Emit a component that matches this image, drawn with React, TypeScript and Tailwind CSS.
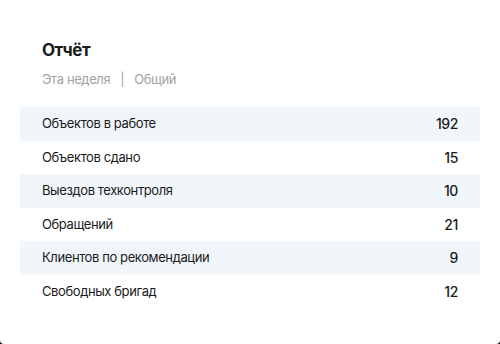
const rows = [
  { label: "Объектов в работе", value: 192 },
  { label: "Объектов сдано", value: 15 },
  { label: "Выездов техконтроля", value: 10 },
  { label: "Обращений", value: 21 },
  { label: "Клиентов по рекомендации", value: 9 },
  { label: "Свободных бригад", value: 12 },
];

export default function App() {
  return (
    <div className="h-[344px] w-[500px] bg-black">
      <div className="h-full bg-white rounded-b-[4px] pt-[38px] font-['Inter',sans-serif] text-[#1a1a1a]">
        <div className="px-[42px]">
          <h2 className="text-[17px] leading-6 font-bold tracking-[-0.5px]">Отчёт</h2>
          <div className="mt-[7px] flex items-center text-[13px] leading-5 tracking-[-0.4px] text-[#a3a3a3]">
            <span>Эта неделя</span>
            <span className="mx-[10px]">|</span>
            <span>Общий</span>
          </div>
        </div>
        <div className="mx-5 mt-[18px]">
          {rows.map((row, i) => (
            <div
              key={row.label}
              className={`flex h-[33.5px] items-center justify-between px-[22px] text-[13px] tracking-[-0.4px] ${
                i % 2 === 0 ? "bg-[#f1f6fb]" : ""
              }`}
            >
              <span>{row.label}</span>
              <span className="text-[14px] font-medium">{row.value}</span>
            </div>
          ))}
        </div>
      </div>
    </div>
  );
}
